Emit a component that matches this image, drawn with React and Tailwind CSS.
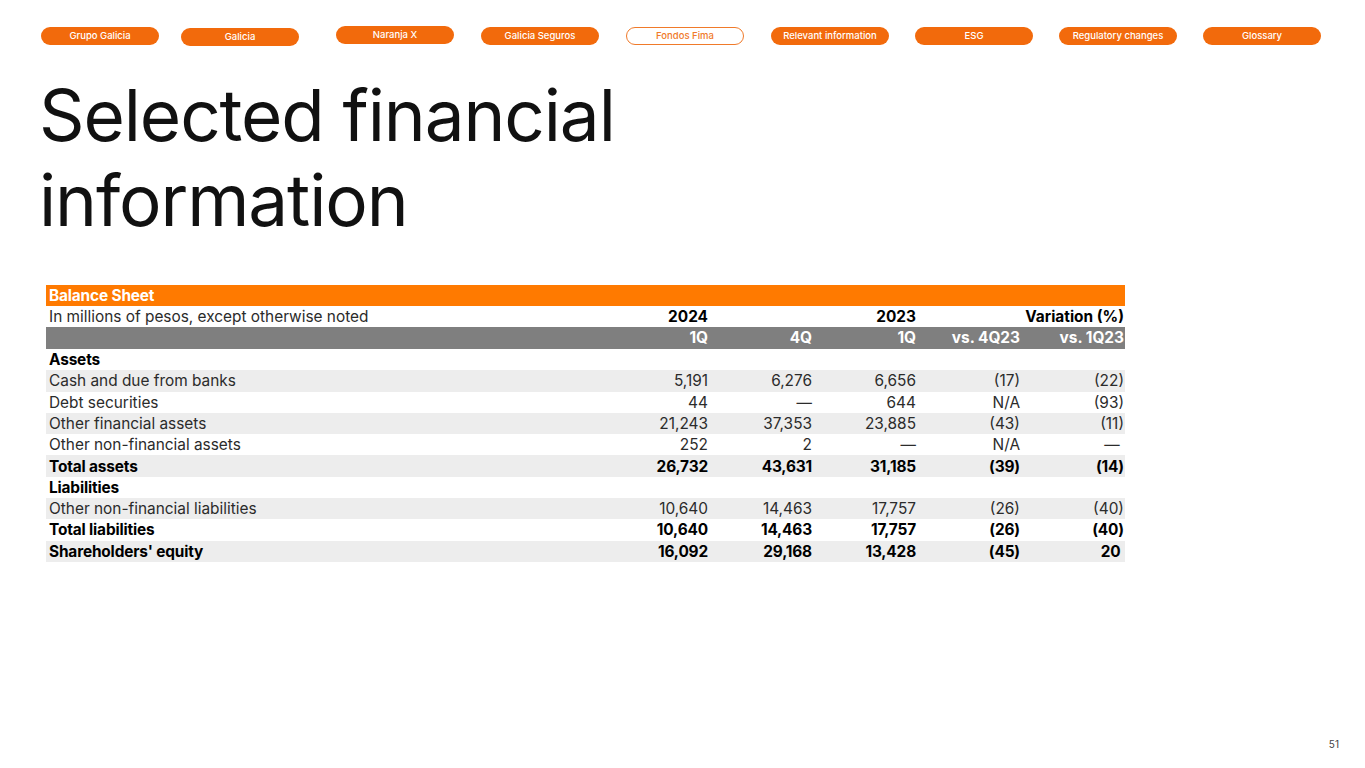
const tabs = [
  { label: "Grupo Galicia", cls: "mt-[2px]" },
  { label: "Galicia", cls: "mt-[3px] ml-[22px]" },
  { label: "Naranja X", cls: "mt-[1px] ml-[37px]" },
  { label: "Galicia Seguros", cls: "mt-[2px] ml-[27px]" },
  { label: "Fondos Fima", cls: "mt-[2px] ml-[27px]", outline: true },
  { label: "Relevant information", cls: "mt-[2px] ml-[27px]" },
  { label: "ESG", cls: "mt-[2px] ml-[26px]" },
  { label: "Regulatory changes", cls: "mt-[2px] ml-[26px]" },
  { label: "Glossary", cls: "mt-[2px] ml-[26px]" },
];

const rows = [
  { label: "Assets", section: true },
  { label: "Cash and due from banks", v: ["5,191", "6,276", "6,656", "(17)", "(22)"], shade: true },
  { label: "Debt securities", v: ["44", "—", "644", "N/A", "(93)"] },
  { label: "Other financial assets", v: ["21,243", "37,353", "23,885", "(43)", "(11)"], shade: true },
  { label: "Other non-financial assets", v: ["252", "2", "—", "N/A", "— "] },
  { label: "Total assets", v: ["26,732", "43,631", "31,185", "(39)", "(14)"], shade: true, bold: true },
  { label: "Liabilities", section: true },
  { label: "Other non-financial liabilities", v: ["10,640", "14,463", "17,757", "(26)", "(40)"], shade: true },
  { label: "Total liabilities", v: ["10,640", "14,463", "17,757", "(26)", "(40)"], bold: true },
  { label: "Shareholders' equity", v: ["16,092", "29,168", "13,428", "(45)", "20 "], shade: true, bold: true },
];

function Row({ label, v = [], shade, bold, section }) {
  return (
    <div
      className={`flex h-[21.3px] items-center ${shade ? "bg-[#ededed]" : "bg-white"} ${
        bold || section ? "font-bold tracking-[-0.15px] text-black" : "text-[#2b2b2b]"
      }`}
    >
      <div className="flex-1 pl-[3px]">{label}</div>
      {v.map((x, i) => (
        <div key={i} className="w-[104px] pr-[1px] text-right whitespace-pre">
          {x}
        </div>
      ))}
    </div>
  );
}

export default function App() {
  return (
    <div className="relative h-[768px] w-[1365px] bg-white font-['Inter',sans-serif] text-black">
      <div className="flex pl-[41px] pt-[25px]">
        {tabs.map((t) => (
          <div
            key={t.label}
            className={`flex h-[18px] w-[118px] items-center justify-center rounded-full text-[9.5px] font-medium ${t.cls} ${
              t.outline
                ? "border border-[#f07a2a] bg-white text-[#f07a2a]"
                : "bg-[#f26a0c] text-white"
            }`}
          >
            {t.label}
          </div>
        ))}
      </div>

      <h1 className="ml-[39px] mt-[27px] text-[71px] leading-[85px] font-normal tracking-[-1.1px] text-[#111]">
        Selected financial
        <br />
        information
      </h1>

      <div className="ml-[46px] mt-[42px] w-[1079px] text-[15.4px]">
        <div className="flex h-[21px] items-center bg-[#ff7a00] pl-[3px] font-bold tracking-[-0.15px] text-white">
          Balance Sheet
        </div>
        <div className="flex h-[21px] items-center text-[#2b2b2b]">
          <div className="flex-1 pl-[3px]">In millions of pesos, except otherwise noted</div>
          <div className="w-[104px] pr-[1px] text-right font-bold text-black">2024</div>
          <div className="w-[104px]" />
          <div className="w-[104px] pr-[1px] text-right font-bold text-black">2023</div>
          <div className="w-[208px] pr-[1px] text-right font-bold text-black">Variation (%)</div>
        </div>
        <div className="flex h-[22px] items-center bg-[#7f7f7f] font-bold text-white">
          <div className="flex-1" />
          {["1Q", "4Q", "1Q", "vs. 4Q23", "vs. 1Q23"].map((h, i) => (
            <div key={i} className="w-[104px] pr-[1px] text-right">
              {h}
            </div>
          ))}
        </div>
        {rows.map((r) => (
          <Row key={r.label} {...r} />
        ))}
      </div>

      <div className="absolute bottom-[16px] right-[26px] text-[10px] text-[#444]">51</div>
    </div>
  );
}
